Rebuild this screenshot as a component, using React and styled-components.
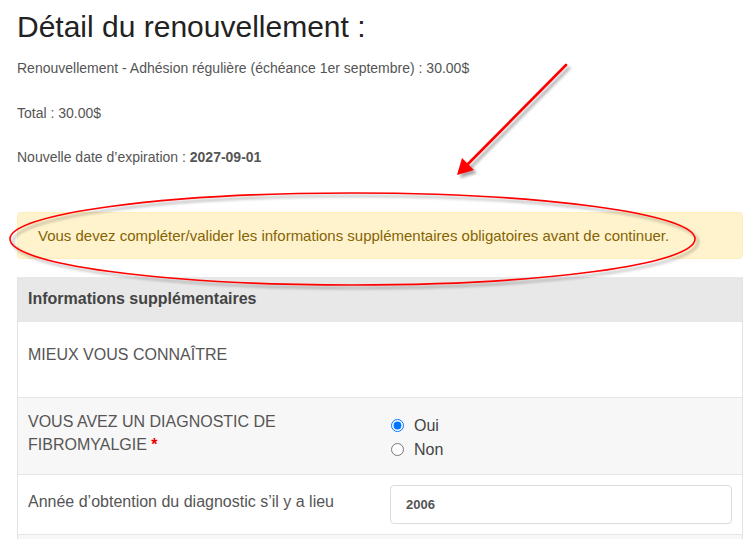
import React from "react";
import styled, { createGlobalStyle } from "styled-components";

const Global = createGlobalStyle`
  html, body { margin: 0; padding: 0; background: #fff; }
  body { font-family: "Liberation Sans", Arial, sans-serif; color: #555; }
`;

const Page = styled.div`
  position: relative;
  width: 755px;
  height: 539px;
  overflow: hidden;
  padding: 10px 12px 0 17px;
  box-sizing: border-box;
`;

const Title = styled.h1`
  margin: 0;
  font-size: 30px;
  line-height: 33px;
  font-weight: 400;
  color: #222;
`;

const Summary = styled.div`
  display: flex;
  flex-direction: column;
  gap: 24.5px;
  margin-top: 15px;
`;

const Line = styled.p`
  margin: 0;
  font-size: 14px;
  line-height: 20px;
  color: #555;
  b { font-weight: 700; }
`;

const Alert = styled.div`
  margin-top: 45px;
  padding: 12px 20px;
  border: 1px solid #ffeeba;
  border-radius: 4px;
  background: #fff3cd;
  color: #856404;
  font-size: 15px;
  line-height: 21px;
`;

const Panel = styled.div`
  margin-top: 18px;
  border: 1px solid #e3e3e3;
  border-top: none;
`;

const PanelHeader = styled.div`
  height: 44px;
  box-sizing: border-box;
  padding: 0 10px;
  display: flex;
  align-items: center;
  background: #e8e8e8;
  color: #444;
  font-weight: 700;
  font-size: 16px;
`;

const Row = styled.div`
  display: grid;
  grid-template-columns: 1fr 1fr;
  align-items: start;
  border-top: 1px solid #e6e6e6;
  background: ${(p) => (p.$shade ? "#f7f7f7" : "#fff")};
  padding: ${(p) => p.$pad || "10px 0"};
`;

const Cell = styled.div`
  padding: ${(p) => p.$pad || "0 10px"};
  font-size: 16px;
  line-height: 23px;
  color: #555;
`;

const Required = styled.span`
  color: #e00;
  font-weight: 700;
`;

const RadioGroup = styled.div`
  display: flex;
  flex-direction: column;
  padding-top: 3px;
`;

const RadioLabel = styled.label`
  display: flex;
  align-items: center;
  height: 24px;
  font-size: 16px;
  color: #444;
  input {
    width: 13px;
    height: 13px;
    margin: 0 10px 0 1px;
  }
`;

const Input = styled.input`
  display: block;
  box-sizing: border-box;
  width: 100%;
  height: 39px;
  border: 1px solid #dcdcdc;
  border-radius: 4px;
  padding: 0 15px;
  font-family: "Liberation Sans", Arial, sans-serif;
  font-size: 13px;
  font-weight: 700;
  color: #555;
  background: #fff;
  outline: none;
`;

const Overlay = styled.svg`
  position: absolute;
  left: 0;
  top: 0;
  pointer-events: none;
`;

export default function App() {
  return (
    <>
      <Global />
      <Page>
        <Title>Détail du renouvellement :</Title>
        <Summary>
          <Line>Renouvellement - Adhésion régulière (échéance 1er septembre) : 30.00$</Line>
          <Line>Total : 30.00$</Line>
          <Line>
            Nouvelle date d’expiration : <b>2027-09-01</b>
          </Line>
        </Summary>
        <Alert>
          Vous devez compléter/valider les informations supplémentaires obligatoires avant de continuer.
        </Alert>
        <Panel>
          <PanelHeader>Informations supplémentaires</PanelHeader>
          <Row $pad="21px 0 31px">
            <Cell>MIEUX VOUS CONNAÎTRE</Cell>
          </Row>
          <Row $shade $pad="12px 0 13px">
            <Cell>
              VOUS AVEZ UN DIAGNOSTIC DE FIBROMYALGIE&nbsp;<Required>*</Required>
            </Cell>
            <Cell>
              <RadioGroup>
                <RadioLabel>
                  <input type="radio" name="fibro" defaultChecked />
                  Oui
                </RadioLabel>
                <RadioLabel>
                  <input type="radio" name="fibro" />
                  Non
                </RadioLabel>
              </RadioGroup>
            </Cell>
          </Row>
          <Row $pad="10px 0">
            <Cell $pad="5px 10px 0">Année d’obtention du diagnostic s’il y a lieu</Cell>
            <Cell>
              <Input defaultValue="2006" readOnly />
            </Cell>
          </Row>
          <Row $shade $pad="10px 0">
            <Cell>&nbsp;</Cell>
          </Row>
        </Panel>
        <Overlay width="755" height="539" viewBox="0 0 755 539">
          <defs>
            <filter id="sh" x="-10%" y="-30%" width="120%" height="160%">
              <feGaussianBlur in="SourceAlpha" stdDeviation="1.5" />
              <feOffset dx="3" dy="3" result="b" />
              <feComponentTransfer>
                <feFuncA type="linear" slope="0.35" />
              </feComponentTransfer>
              <feMerge>
                <feMergeNode />
                <feMergeNode in="SourceGraphic" />
              </feMerge>
            </filter>
          </defs>
          <g filter="url(#sh)">
            <ellipse cx="352.5" cy="239" rx="342.5" ry="46" fill="none" stroke="#f00" strokeWidth="1.6" />
            <line x1="566" y1="65" x2="466" y2="166" stroke="#f00" strokeWidth="2.6" strokeLinecap="round" />
            <polygon points="457,175 462,158 474,170" fill="#f00" />
          </g>
        </Overlay>
      </Page>
    </>
  );
}
